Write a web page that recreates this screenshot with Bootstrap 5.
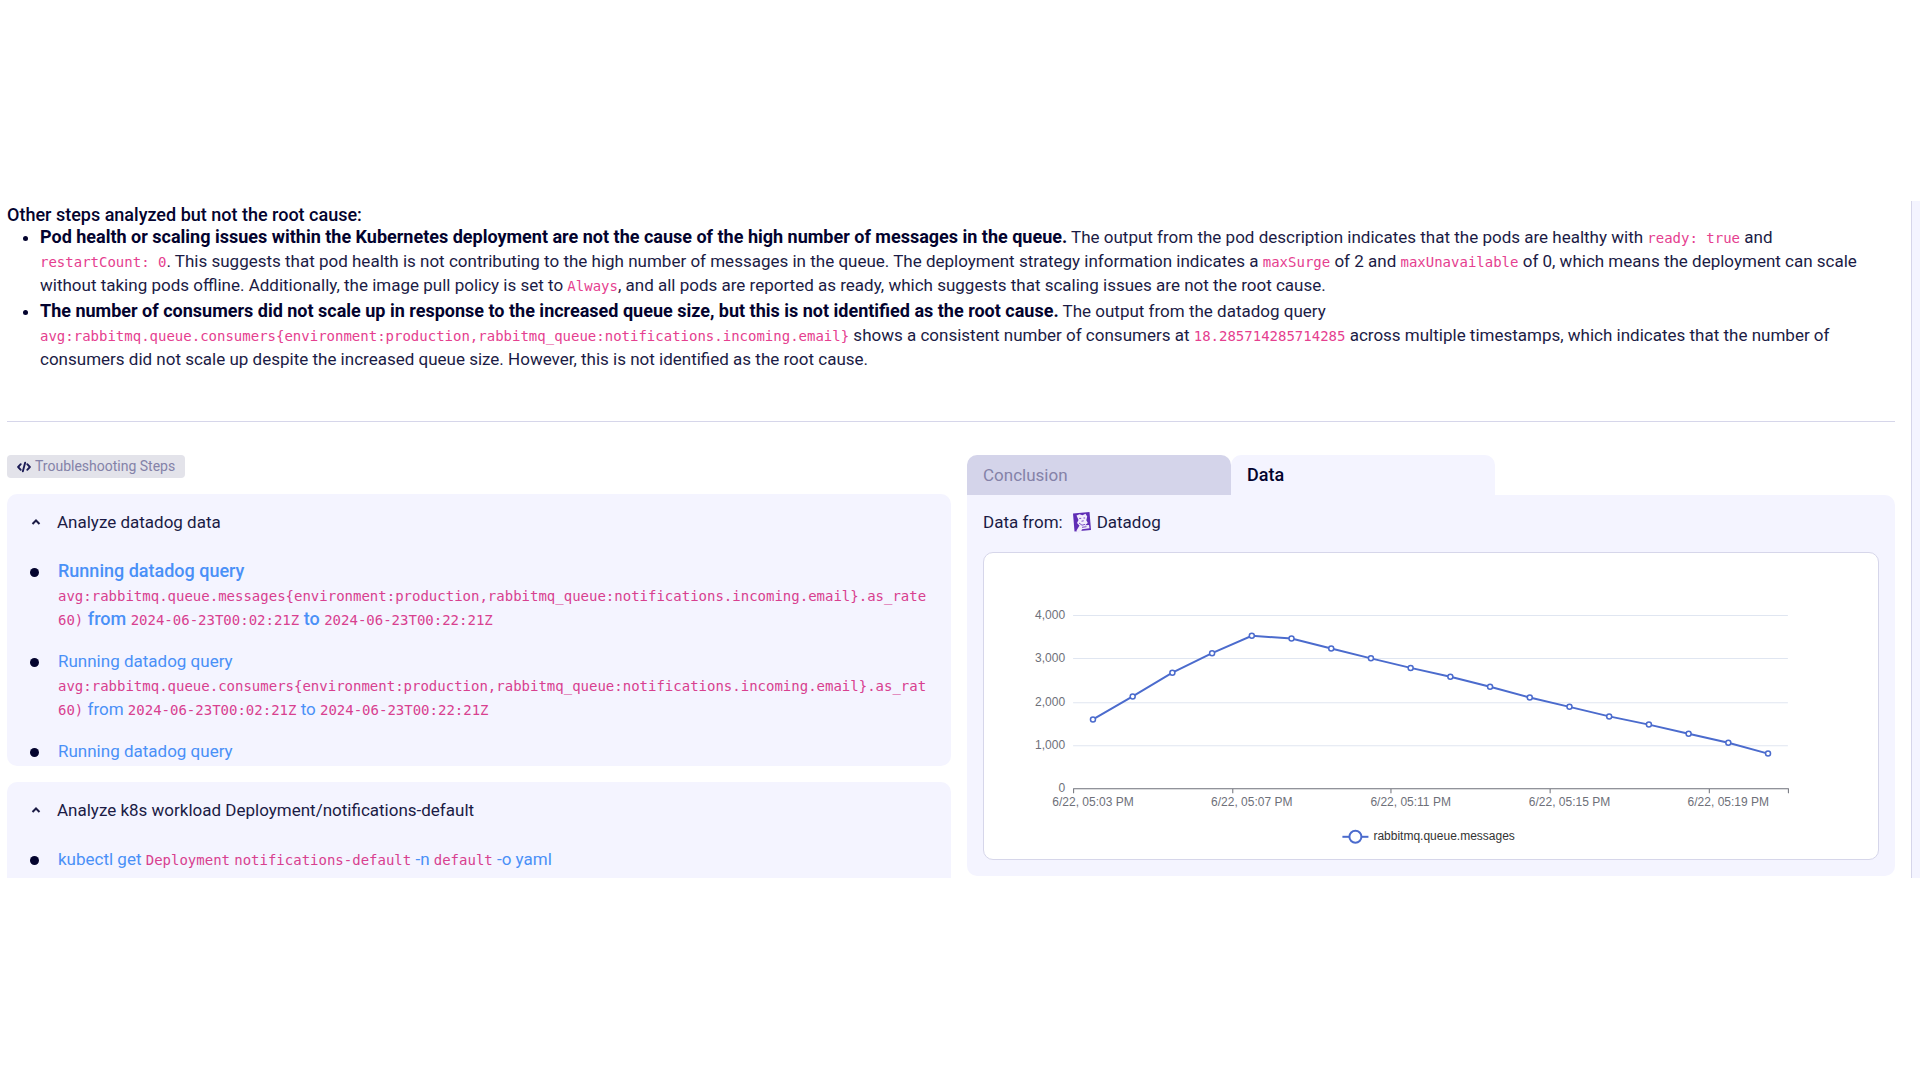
<!DOCTYPE html>
<html lang="en">
<head>
<meta charset="utf-8">
<meta name="viewport" content="width=device-width, initial-scale=1">
<title>Root cause analysis</title>
<link href="https://cdn.jsdelivr.net/npm/bootstrap@5.3.0/dist/css/bootstrap.min.css" rel="stylesheet">
<style>
  :root { --ink: #1b1b45; --ink-strong: #03032e; --panel: #f4f4ff; --line: #d6d6ea; --soft: #8482a8; --link: #4a90f7; }
  body { font-family: Roboto, "Liberation Sans", sans-serif; font-size: 17px; line-height: 24px; color: var(--ink); background: #fff; padding-top: 201px; }
  code, .step-list a code { font-family: "DejaVu Sans Mono", monospace; font-size: 14px; line-height: 1; color: #d8408f; }
  .findings code { color: #e5408f; }
  .report { padding: 3px 16px 0 7px; }
  .side-strip { width: 9px; background: var(--panel); border-left: 1px solid var(--line); }
  .findings-title { font-size: 18px; line-height: 21px; font-weight: 500; color: var(--ink-strong); }
  .findings { padding-left: 33px; }
  .findings li + li { margin-top: 2px; }
  .findings li::marker { color: var(--ink-strong); }
  .findings b { font-size: 18px; line-height: 1; color: var(--ink-strong); font-weight: 700; }
  .divider { border-top: 1px solid var(--line); margin: 50px 0 33px; opacity: 1; }
  .steps { width: 50%; }
  .steps-tag { font-size: 14px; line-height: 23px; padding: 0 10px; background: #e3e3ea; color: var(--soft); border-radius: 4px; }
  .step-panel { background: var(--panel); border-radius: 10px; padding: 16px 0 3px; }
  .step-panel:last-child { border-radius: 10px 10px 0 0; padding-bottom: 7px; }
  .step-toggle { border: 0; background: none; padding: 0 0 0 24px; gap: 16px; color: var(--ink); }
  .step-list { margin: 25px 0 0; padding: 0; list-style: none; gap: 18px; }
  .step-list li { padding-left: 23px; gap: 19px; }
  .dot { flex: none; width: 9px; height: 9px; border-radius: 50%; background: var(--ink-strong); margin-top: 9px; }
  .step-list a { color: var(--link); text-decoration: none; white-space: nowrap; }
  .step-list .current { font-size: 18px; font-weight: 500; }
  .tab-row .nav-link { width: 264px; height: 40px; padding: 0 16px; text-align: left; color: var(--soft); background: #d4d4ea; border: 0; border-radius: 10px 10px 0 0; }
  .tab-row .nav-link.active { background: var(--panel); color: var(--ink-strong); font-size: 18px; font-weight: 500; }
  .data-panel { background: var(--panel); border-radius: 0 10px 10px 10px; padding: 15px 16px 16px; }
  .source-row { gap: 5px; }
  .chart-card { background: #fff; border: 1px solid var(--line); border-radius: 10px; margin-top: 18px; }
  .chart-card text { font-family: "Liberation Sans", Arial, sans-serif; font-size: 12px; fill: #6e7079; }
  .chart-card .legend-text { fill: #333; }
</style>
<script src="https://cdn.jsdelivr.net/npm/bootstrap@5.3.0/dist/js/bootstrap.bundle.min.js"></script>
</head>
<body>
<div class="d-flex">
  <main class="report flex-fill">
    <h1 class="findings-title m-0">Other steps analyzed but not the root cause:</h1>
    <ul class="findings mb-0">
      <li><b>Pod health or scaling issues within the Kubernetes deployment are not the cause of the high number of messages in the queue.</b> The output from the pod description indicates that the pods are healthy with <code>ready: true</code> and<br><code>restartCount: 0</code>. This suggests that pod health is not contributing to the high number of messages in the queue. The deployment strategy information indicates a <code>maxSurge</code> of 2 and <code>maxUnavailable</code> of 0, which means the deployment can scale<br>without taking pods offline. Additionally, the image pull policy is set to <code>Always</code>, and all pods are reported as ready, which suggests that scaling issues are not the root cause.</li>
      <li><b>The number of consumers did not scale up in response to the increased queue size, but this is not identified as the root cause.</b> The output from the datadog query<br><code>avg:rabbitmq.queue.consumers{environment:production,rabbitmq_queue:notifications.incoming.email}</code> shows a consistent number of consumers at <code>18.285714285714285</code> across multiple timestamps, which indicates that the number of<br>consumers did not scale up despite the increased queue size. However, this is not identified as the root cause.</li>
    </ul>
    <hr class="divider">
    <div class="d-flex gap-3 align-items-start">
      <section class="steps d-flex flex-column align-items-stretch gap-3">
        <div class="steps-tag d-flex align-items-center align-self-start gap-1">
          <svg width="14" height="12" viewBox="0 0 15 12" fill="none" stroke="#1b1b55" stroke-width="2" stroke-linecap="round" stroke-linejoin="round" aria-hidden="true"><path d="M4 3 1.200 6 4 9M11 3l2.800 3L11 9M8.700 1.400 6.300 10.600"/></svg>
          <span>Troubleshooting Steps</span>
        </div>
        <section class="step-panel">
          <button class="step-toggle d-flex align-items-center" type="button" aria-expanded="true">
            <svg width="10" height="8" viewBox="0 0 10 8" fill="none" stroke="#1b1b45" stroke-width="2" aria-hidden="true"><path d="M1.500 6 5 2.500 8.500 6"/></svg>
            <span>Analyze datadog data</span>
          </button>
          <ul class="step-list d-flex flex-column">
            <li class="d-flex"><span class="dot"></span><a href="#q1" class="current">Running datadog query<br><code class="fw-normal">avg:rabbitmq.queue.messages{environment:production,rabbitmq_queue:notifications.incoming.email}.as_rate</code><br><code class="fw-normal">60)</code> from <code class="fw-normal">2024-06-23T00:02:21Z</code> to <code class="fw-normal">2024-06-23T00:22:21Z</code></a></li>
            <li class="d-flex"><span class="dot"></span><a href="#q2">Running datadog query<br><code>avg:rabbitmq.queue.consumers{environment:production,rabbitmq_queue:notifications.incoming.email}.as_rat</code><br><code>60)</code> from <code>2024-06-23T00:02:21Z</code> to <code>2024-06-23T00:22:21Z</code></a></li>
            <li class="d-flex"><span class="dot"></span><a href="#q3">Running datadog query</a></li>
          </ul>
        </section>
        <section class="step-panel">
          <button class="step-toggle d-flex align-items-center" type="button" aria-expanded="true">
            <svg width="10" height="8" viewBox="0 0 10 8" fill="none" stroke="#1b1b45" stroke-width="2" aria-hidden="true"><path d="M1.500 6 5 2.500 8.500 6"/></svg>
            <span>Analyze k8s workload Deployment/notifications-default</span>
          </button>
          <ul class="step-list d-flex flex-column">
            <li class="d-flex"><span class="dot"></span><a href="#k1">kubectl get <code>Deployment</code> <code>notifications-default</code> -n <code>default</code> -o yaml</a></li>
          </ul>
        </section>
      </section>
      <section class="flex-fill">
        <div class="tab-row nav" role="tablist">
          <button class="nav-link" type="button" role="tab" aria-selected="false">Conclusion</button>
          <button class="nav-link active" type="button" role="tab" aria-selected="true">Data</button>
        </div>
        <div class="data-panel" role="tabpanel">
          <div class="source-row d-flex align-items-center">
            <span class="me-1">Data from:</span>
            <svg width="20" height="22" viewBox="0 0 20 22" aria-hidden="true">
              <path d="M1 2.500 17.500 1 19 19 2.500 20.500Z" fill="#5f2db5"/>
              <path d="M4.500 4.500 7.500 3.200 10.500 4.200 13.500 2.800 15.200 5.500 14.300 9.300 15.800 12 13 14.200 17 14 17.500 17.200 10 18.200 9 21 5.500 22 4.500 19.500 7.500 14.500 5 12 6.500 9Z" fill="#f1ecfc"/>
              <path d="M7.200 7.400h2M11.500 7h1.600M9.500 10.200l2.200-.4M7 12l3 2.200 3-.8M10 16.300l4.500-.6" stroke="#7a4dc6" fill="none"/>
            </svg>
            <span>Datadog</span>
          </div>
          <div class="chart-card">
            <svg id="chart" class="d-block w-100" viewBox="0 0 893 306" role="img" aria-label="rabbitmq.queue.messages over time"></svg>
          </div>
        </div>
      </section>
    </div>
  </main>
  <aside class="side-strip flex-shrink-0"></aside>
</div>
<script>
  // Line chart: one category slot per minute, a tick and label every fourth slot.
  const values = [1590, 2120, 2670, 3120, 3520, 3460, 3230, 3000, 2780, 2575, 2345, 2095, 1880, 1660, 1470, 1260, 1050, 800];
  const left = 89, right = 803, base = 235, top4 = 62, slot = (right - left) / values.length;
  const x = i => left + slot * (i + .5), y = v => base - v * (base - top4) / 4000;
  let out = '';
  for (let v = 0; v <= 4000; v += 1000) {
    if (v) out += `<line x1="${left}" x2="${right}" y1="${Math.round(y(v)) + .5}" y2="${Math.round(y(v)) + .5}" stroke="#e0e6f1"/>`;
    out += `<text x="81" y="${Math.round(y(v)) + 4}" text-anchor="end">${v.toLocaleString('en-US')}</text>`;
  }
  let ticks = `M${left} 235.5H${right}`;
  for (const i of [0, 4, 8, 12, 16, 18]) ticks += `M${Math.round(left + slot * i) + .5} 235v5`;
  out += `<path d="${ticks}" stroke="#6e7079" fill="none"/>`;
  ['03', '07', '11', '15', '19'].forEach((m, k) => out += `<text x="${x(k * 4)}" y="253" text-anchor="middle">6/22, 05:${m} PM</text>`);
  out += `<polyline points="${values.map((v, i) => x(i) + ',' + y(v)).join(' ')}" fill="none" stroke="#4b6bcd" stroke-width="2"/>`;
  values.forEach((v, i) => out += `<circle cx="${x(i)}" cy="${y(v)}" r="2.500" fill="#fff" stroke="#4b6bcd" stroke-width="1.500"/>`);
  out += `<path d="M358 283.500h26" stroke="#4b6bcd" stroke-width="2"/><circle cx="371" cy="283.500" r="6" fill="#fff" stroke="#4b6bcd" stroke-width="2"/><text class="legend-text" x="389" y="287">rabbitmq.queue.messages</text>`;
  document.getElementById('chart').innerHTML = out;
</script>
</body>
</html>
